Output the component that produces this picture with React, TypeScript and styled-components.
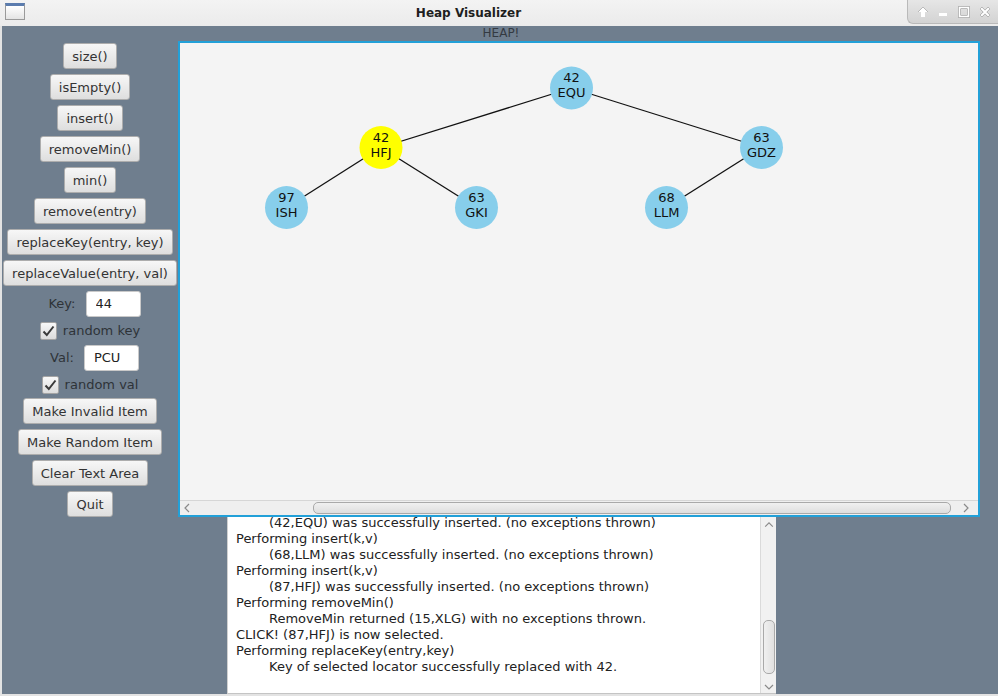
import React from "react";
import styled, { createGlobalStyle } from "styled-components";

const Global = createGlobalStyle`
  html, body { margin: 0; padding: 0; background: #6f7e8e; }
  * { box-sizing: border-box; }
`;

const UI = `"DejaVu Sans", "Liberation Sans", sans-serif`;

const Window = styled.div`
  width: 998px;
  height: 696px;
  display: flex;
  flex-direction: column;
  font-family: ${UI};
  font-size: 13px;
  color: #333;
  overflow: hidden;
`;

const TitleBar = styled.div`
  height: 26px;
  flex: none;
  display: flex;
  align-items: flex-start;
  background: linear-gradient(#f3f3f3, #ebebeb);
`;

const AppIcon = styled.div`
  width: 30px;
  height: 26px;
  flex: none;
  padding: 3px 5px;
  & > div {
    width: 20px;
    height: 17px;
    border: 1px solid #9a9a9a;
    border-top: 3px solid #5b7cae;
    background: linear-gradient(#ffffff, #e4e4e4);
  }
`;

const Title = styled.div`
  flex: 1;
  text-align: center;
  font-weight: bold;
  color: #1e1e1e;
  line-height: 26px;
  font-size: 12px;
`;

const WinButtons = styled.div`
  width: 91px;
  height: 24px;
  flex: none;
  display: flex;
  align-items: center;
  justify-content: space-around;
  padding: 0 2px 0 4px;
  background: linear-gradient(#e6e6e6, #d3d3d3);
  border-left: 1px solid #b9b9b9;
  border-bottom: 1px solid #b9b9b9;
  border-bottom-left-radius: 6px;
  & svg {
    filter: drop-shadow(0 0 0.6px #6a6a6a) drop-shadow(0 0 0.4px #6a6a6a);
  }
`;

const Body = styled.div`
  flex: 1;
  display: flex;
  flex-direction: column;
  background: #6f7e8e;
  border-left: 2px solid #e3e3e3;
  border-bottom: 2px solid #e3e3e3;
`;

const HeapLabel = styled.div`
  height: 15px;
  flex: none;
  text-align: center;
  font-size: 12px;
  line-height: 15px;
  color: #343a42;
  padding-left: 2px;
`;

const MainRow = styled.div`
  height: 476px;
  flex: none;
  display: flex;
`;

const Controls = styled.div`
  width: 176px;
  flex: none;
  display: flex;
  flex-direction: column;
  align-items: center;
  padding-top: 2px;
`;

const Group = styled.div<{ $gap: number; $mt?: number }>`
  display: flex;
  flex-direction: column;
  align-items: center;
  gap: ${(p) => p.$gap}px;
  margin-top: ${(p) => p.$mt ?? 0}px;
`;

const Button = styled.button`
  height: 26px;
  padding: 0 8px;
  font-family: ${UI};
  font-size: 13px;
  color: #333;
  background: linear-gradient(#f7f7f7, #dedede);
  border: 1px solid #adadad;
  border-radius: 3px;
  white-space: nowrap;
  cursor: default;
`;

const FieldRow = styled.div<{ $shift?: number }>`
  height: 27px;
  display: flex;
  align-items: center;
  gap: 10px;
  padding-left: ${(p) => p.$shift ?? 0}px;
`;

const FieldLabel = styled.span`
  color: #2e3338;
`;

const Input = styled.input`
  width: 55px;
  height: 26px;
  padding: 0 0 0 9px;
  border: 1px solid #c9c9c9;
  border-radius: 3px;
  background: #fff;
  font-family: ${UI};
  font-size: 13px;
  color: #222;
  outline: none;
`;

const CheckRow = styled.label`
  height: 27px;
  display: flex;
  align-items: center;
  gap: 6px;
  color: #2e3338;
`;

const CheckBox = styled.span`
  width: 17px;
  height: 18px;
  border: 1px solid #a4a4a4;
  border-radius: 2px;
  background: linear-gradient(#f8f8f8, #dcdcdc);
  display: flex;
  align-items: center;
  justify-content: center;
`;

const Canvas = styled.div`
  width: 802px;
  height: 476px;
  flex: none;
  border: 2px solid #22a0d8;
  background: #f4f4f4;
  display: flex;
  flex-direction: column;
`;

const Drawing = styled.div`
  flex: 1;
  position: relative;
`;

const HScroll = styled.div`
  height: 15px;
  flex: none;
  display: flex;
  align-items: center;
  background: #efefef;
  border-top: 1px solid #d6d6d6;
`;

const Arrow = styled.div`
  width: 133px;
  flex: none;
  display: flex;
  align-items: center;
  padding-left: 3px;
  &.right {
    width: 27px;
    justify-content: center;
  }
`;

const HThumb = styled.div`
  width: 639px;
  height: 12px;
  border: 1px solid #a9a9a9;
  border-radius: 5px;
  background: linear-gradient(#f0f0f0, #dedede);
`;

const South = styled.div`
  height: 177px;
  flex: none;
  display: flex;
  justify-content: center;
  padding-left: 3px;
`;

const TextArea = styled.div`
  width: 549px;
  height: 177px;
  display: flex;
  background: #fff;
  border-left: 1px solid #d0d0d0;
  border-bottom: 1px solid #c4c4c4;
  overflow: hidden;
`;

const Log = styled.div`
  flex: 1;
  padding-left: 8px;
  margin-top: -2px;
  line-height: 16px;
  color: #222;
  white-space: pre;
`;

const LogLine = styled.div<{ $indent?: boolean }>`
  padding-left: ${(p) => (p.$indent ? 33 : 0)}px;
`;

const VScroll = styled.div`
  width: 16px;
  flex: none;
  display: flex;
  flex-direction: column;
  align-items: center;
  background: #f1f1f1;
  border-left: 1px solid #dadada;
  padding-top: 4px;
`;

const VThumb = styled.div`
  width: 12px;
  height: 57px;
  margin-top: 91px;
  border: 1px solid #a9a9a9;
  border-radius: 5px;
  background: linear-gradient(90deg, #f0f0f0, #e0e0e0);
`;

const VDown = styled.div`
  margin-top: 4px;
`;

type Node = { x: number; y: number; k: string; v: string; sel?: boolean };

const nodes: Node[] = [
  { x: 391.5, y: 45, k: "42", v: "EQU" },
  { x: 201, y: 104.5, k: "42", v: "HFJ", sel: true },
  { x: 581.5, y: 104.5, k: "63", v: "GDZ" },
  { x: 106.5, y: 164.5, k: "97", v: "ISH" },
  { x: 296.5, y: 164.5, k: "63", v: "GKI" },
  { x: 486.5, y: 164.5, k: "68", v: "LLM" },
];

const edges: [number, number][] = [
  [0, 1],
  [0, 2],
  [1, 3],
  [1, 4],
  [2, 5],
];

const Tree = () => (
  <svg width="798" height="457" style={{ position: "absolute", left: 0, top: 0 }}>
    {edges.map(([a, b], i) => (
      <line
        key={i}
        x1={nodes[a].x}
        y1={nodes[a].y}
        x2={nodes[b].x}
        y2={nodes[b].y}
        stroke="#111"
        strokeWidth={1.3}
      />
    ))}
    {nodes.map((n, i) => (
      <g key={i}>
        <circle cx={n.x} cy={n.y} r={21.5} fill={n.sel ? "#ffff00" : "#87ceeb"} />
        <text
          x={n.x}
          y={n.y - 6}
          textAnchor="middle"
          fontFamily="DejaVu Sans, sans-serif"
          fontSize="13"
          fill="#111"
        >
          {n.k}
        </text>
        <text
          x={n.x}
          y={n.y + 9}
          textAnchor="middle"
          fontFamily="DejaVu Sans, sans-serif"
          fontSize="13"
          fill="#111"
        >
          {n.v}
        </text>
      </g>
    ))}
  </svg>
);

const Chevron = ({ dir }: { dir: "l" | "r" | "u" | "d" }) => {
  const d =
    dir === "l"
      ? "M6 1 L2 5 L6 9"
      : dir === "r"
      ? "M2 1 L6 5 L2 9"
      : dir === "u"
      ? "M1 6 L5 2 L9 6"
      : "M1 3 L5 7 L9 3";
  const w = dir === "l" || dir === "r" ? 8 : 10;
  const h = dir === "l" || dir === "r" ? 10 : 8;
  return (
    <svg width={w} height={h} viewBox={`0 0 ${w} ${h}`}>
      <path d={d} fill="none" stroke="#8a8a8a" strokeWidth="1.2" />
    </svg>
  );
};

const Check = () => (
  <svg width="13" height="12" viewBox="0 0 13 12">
    <path d="M1.5 6.5 L4.8 10 L11.5 1.5" fill="none" stroke="#3a3a3a" strokeWidth="2" />
  </svg>
);

const topButtons = [
  "size()",
  "isEmpty()",
  "insert()",
  "removeMin()",
  "min()",
  "remove(entry)",
  "replaceKey(entry, key)",
  "replaceValue(entry, val)",
];

const bottomButtons = ["Make Invalid Item", "Make Random Item", "Clear Text Area", "Quit"];

const log: [boolean, string][] = [
  [true, "(42,EQU) was successfully inserted. (no exceptions thrown)"],
  [false, "Performing insert(k,v)"],
  [true, "(68,LLM) was successfully inserted. (no exceptions thrown)"],
  [false, "Performing insert(k,v)"],
  [true, "(87,HFJ) was successfully inserted. (no exceptions thrown)"],
  [false, "Performing removeMin()"],
  [true, "RemoveMin returned (15,XLG) with no exceptions thrown."],
  [false, "CLICK! (87,HFJ) is now selected."],
  [false, "Performing replaceKey(entry,key)"],
  [true, "Key of selected locator successfully replaced with 42."],
];

export default function App() {
  return (
    <>
      <Global />
      <Window>
        <TitleBar>
          <AppIcon>
            <div />
          </AppIcon>
          <Title>Heap Visualizer</Title>
          <WinButtons>
            <svg width="12" height="12" viewBox="0 0 12 12">
              <path d="M6 1 L11 6 L8 6 L8 11 L4 11 L4 6 L1 6 Z" fill="#fff" />
            </svg>
            <svg width="10" height="12" viewBox="0 0 10 12">
              <rect x="1" y="7" width="8" height="3" fill="#fff" />
            </svg>
            <svg width="12" height="12" viewBox="0 0 12 12">
              <rect x="1.5" y="1.5" width="9" height="9" fill="none" stroke="#fff" strokeWidth="2" />
            </svg>
            <svg width="12" height="12" viewBox="0 0 12 12">
              <path d="M2 2 L10 10 M10 2 L2 10" stroke="#fff" strokeWidth="2.4" />
            </svg>
          </WinButtons>
        </TitleBar>
        <Body>
          <HeapLabel>HEAP!</HeapLabel>
          <MainRow>
            <Controls>
              <Group $gap={5}>
                {topButtons.map((b) => (
                  <Button key={b}>{b}</Button>
                ))}
              </Group>
              <Group $gap={0} $mt={4}>
                <FieldRow $shift={9}>
                  <FieldLabel>Key:</FieldLabel>
                  <Input defaultValue="44" />
                </FieldRow>
                <CheckRow>
                  <CheckBox>
                    <Check />
                  </CheckBox>
                  random key
                </CheckRow>
                <FieldRow $shift={9}>
                  <FieldLabel>Val:</FieldLabel>
                  <Input defaultValue="PCU" />
                </FieldRow>
                <CheckRow>
                  <CheckBox>
                    <Check />
                  </CheckBox>
                  random val
                </CheckRow>
              </Group>
              <Group $gap={5}>
                {bottomButtons.map((b) => (
                  <Button key={b}>{b}</Button>
                ))}
              </Group>
            </Controls>
            <Canvas>
              <Drawing>
                <Tree />
              </Drawing>
              <HScroll>
                <Arrow>
                  <Chevron dir="l" />
                </Arrow>
                <HThumb />
                <Arrow className="right">
                  <Chevron dir="r" />
                </Arrow>
              </HScroll>
            </Canvas>
          </MainRow>
          <South>
            <TextArea>
              <Log>
                {log.map(([ind, t], i) => (
                  <LogLine key={i} $indent={ind}>
                    {t}
                  </LogLine>
                ))}
              </Log>
              <VScroll>
                <Chevron dir="u" />
                <VThumb />
                <VDown>
                  <Chevron dir="d" />
                </VDown>
              </VScroll>
            </TextArea>
          </South>
        </Body>
      </Window>
    </>
  );
}
